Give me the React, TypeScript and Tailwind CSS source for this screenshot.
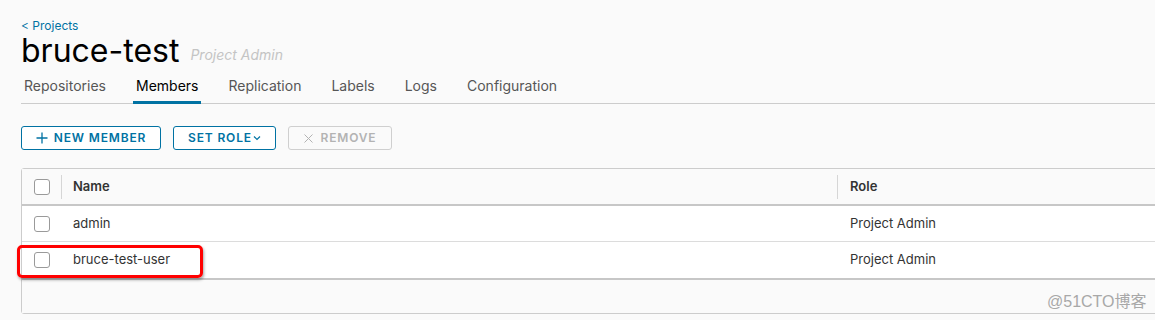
import React from 'react';

const FONT = { fontFamily: 'Inter, "Noto Sans", "Liberation Sans", sans-serif' };

const tabs = ['Repositories', 'Members', 'Replication', 'Labels', 'Logs', 'Configuration'];

const members = [
  { name: 'admin', role: 'Project Admin' },
  { name: 'bruce-test-user', role: 'Project Admin' },
];

function Checkbox() {
  return <div className="h-4 w-4 rounded-[3px] border border-[#9a9a9a] bg-white" />;
}

export default function App() {
  return (
    <div className="relative h-[320px] w-[1155px] overflow-hidden bg-[#fafafa] pt-[18px]" style={FONT}>
      {/* Cabecera */}
      <div className="pl-[21px]">
        <a className="block h-[15px] text-[12px] leading-[15px] text-[#0072a3]">&lt; Projects</a>
        <div className="flex h-[36px] items-end">
          <h1 className="text-[32px] leading-[36px] text-black">bruce-test</h1>
          <span className="mb-[4px] ml-[11px] text-[14px] italic text-[#c4c4c4]">Project Admin</span>
        </div>
      </div>

      {/* Tabs */}
      <div className="ml-[21px] flex border-b border-[#cccccc]">
        {tabs.map((t) => (
          <div
            key={t}
            className={`-mb-px mr-[24px] flex h-[35px] items-center px-[3px] pt-[1px] text-[14px] ${
              t === 'Members'
                ? 'border-b-[3px] border-[#0072a3] text-black'
                : 'border-b-[3px] border-transparent text-[#565656]'
            }`}
          >
            {t}
          </div>
        ))}
      </div>

      {/* Botones */}
      <div className="mt-[22px] flex gap-[12px] pl-[21px]">
        <button className="flex h-[24px] w-[140px] items-center justify-center gap-[6px] rounded-[3px] border border-[#0072a3] bg-white text-[12px] font-semibold tracking-[0.07em] text-[#0072a3]">
          <svg width="12" height="12" viewBox="0 0 12 12" className="text-[#0072a3]">
            <path d="M6 0.5v11M0.5 6h11" stroke="currentColor" strokeWidth="1.3" />
          </svg>
          NEW MEMBER
        </button>
        <button className="flex h-[24px] w-[103px] items-center justify-center rounded-[3px] border border-[#0072a3] bg-white text-[12px] font-semibold tracking-[0.07em] text-[#0072a3]">
          SET ROLE
          <svg width="8" height="6" viewBox="0 0 8 6" className="ml-[1px]">
            <path d="M1 1.5l3 3 3-3" stroke="currentColor" strokeWidth="1.2" fill="none" />
          </svg>
        </button>
        <button className="flex h-[24px] w-[104px] items-center justify-center gap-[8px] rounded-[3px] border border-[#cfcfcf] text-[12px] font-semibold tracking-[0.07em] text-[#b3b3b3]">
          <svg width="9" height="9" viewBox="0 0 9 9">
            <path d="M0.5 0.5l8 8M8.5 0.5l-8 8" stroke="#b3b3b3" strokeWidth="1" />
          </svg>
          REMOVE
        </button>
      </div>

      {/* Tabla */}
      <div className="ml-[21px] mt-[18px] w-[1160px] rounded-[3px] border border-[#cccccc] bg-white text-[13px]">
        <div className="flex h-[37px] items-center border-b-2 border-[#c7c7c7] bg-[#fafafa] font-semibold text-[#333]">
          <div className="flex h-full w-[39px] items-center pl-[12px]">
            <Checkbox />
          </div>
          <div className="h-[24px] w-px bg-[#d6d6d6]" />
          <div className="w-[775px] pl-[11px]">Name</div>
          <div className="h-[24px] w-px bg-[#d6d6d6]" />
          <div className="pl-[12px]">Role</div>
        </div>
        {members.map((m, i) => (
          <div
            key={m.name}
            className={`flex h-[36px] items-center text-[#333] ${i === 0 ? 'border-b border-[#dcdcdc]' : ''}`}
          >
            <div className="flex w-[39px] items-center pl-[12px]">
              <Checkbox />
            </div>
            <div className="w-[776px] pl-[12px]">{m.name}</div>
            <div className="pl-[13px]">{m.role}</div>
          </div>
        ))}
        <div className="h-[35px] border-t-2 border-[#c7c7c7] bg-[#fafafa]" />
      </div>

      {/* Marca resaltada */}
      <div className="absolute left-[17px] top-[245px] h-[33px] w-[186px] rounded-[5px] border-[3px] border-[#ff0000] shadow-[1px_2px_3px_rgba(0,0,0,0.35)]" />

      {/* Marca de agua */}
      <div
        className="absolute left-[1047px] top-[290px] text-[16px] text-[#a8a8a8]"
        style={{ fontFamily: '"Liberation Sans", "Noto Sans CJK SC", sans-serif' }}
      >
        @51CTO博客
      </div>
    </div>
  );
}
